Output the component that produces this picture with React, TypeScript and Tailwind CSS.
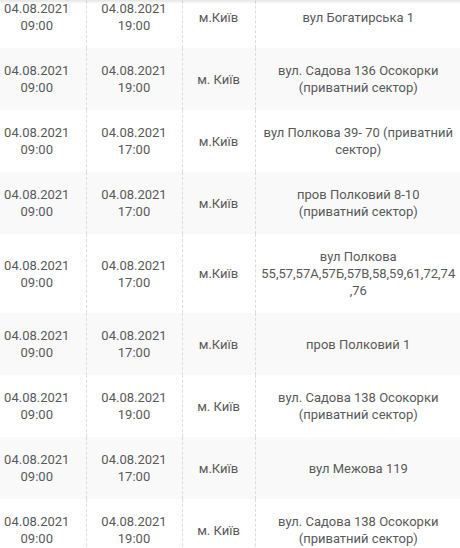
import React from "react";

type Row = { start: string; end: string; city: string; address: string[] };

const rows: Row[] = [
  { start: "09:00", end: "19:00", city: "м.Київ", address: ["вул Богатирська 1"] },
  { start: "09:00", end: "19:00", city: "м. Київ", address: ["вул. Садова 136 Осокорки", "(приватний сектор)"] },
  { start: "09:00", end: "17:00", city: "м.Київ", address: ["вул Полкова 39- 70 (приватний", "сектор)"] },
  { start: "09:00", end: "17:00", city: "м.Київ", address: ["пров Полковий 8-10", "(приватний сектор)"] },
  { start: "09:00", end: "17:00", city: "м.Київ", address: ["вул Полкова", "55,57,57А,57Б,57В,58,59,61,72,74", ",76"] },
  { start: "09:00", end: "17:00", city: "м.Київ", address: ["пров Полковий 1"] },
  { start: "09:00", end: "19:00", city: "м. Київ", address: ["вул. Садова 138 Осокорки", "(приватний сектор)"] },
  { start: "09:00", end: "17:00", city: "м.Київ", address: ["вул Межова 119"] },
  { start: "09:00", end: "19:00", city: "м. Київ", address: ["вул. Садова 138 Осокорки", "(приватний сектор)"] },
];

const date = "04.08.2021";

function Lines({ lines }: { lines: string[] }) {
  return (
    <>
      {lines.map((l, i) => (
        <div key={i} className="whitespace-nowrap">{l}</div>
      ))}
    </>
  );
}

export default function App() {
  return (
    <div className="relative h-[548px] w-[460px] overflow-hidden bg-white font-['Roboto',sans-serif] text-[13px] leading-[17px] text-[#595959]">
      {/* тень сверху */}
      <div className="pointer-events-none absolute inset-x-0 top-0 z-10 h-[4px] bg-gradient-to-b from-black/10 to-transparent" />

      <table className="-mt-[14px] ml-[-12px] w-[473px] table-fixed border-collapse">
        <colgroup>
          <col className="w-[98px]" />
          <col className="w-[96px]" />
          <col className="w-[73px]" />
          <col className="w-[206px]" />
        </colgroup>
        <tbody>
          {rows.map((r, i) => (
            <tr key={i} className={i % 2 === 1 ? "bg-[#f9f9f9]" : "bg-white"}>
              <td className="border-r border-dashed border-[#dcdcdc] px-1 py-[14px] text-center align-middle">
                <Lines lines={[date, r.start]} />
              </td>
              <td className="border-r border-dashed border-[#dcdcdc] px-1 py-[14px] text-center align-middle">
                <Lines lines={[date, r.end]} />
              </td>
              <td className="border-r border-dashed border-[#dcdcdc] px-1 py-[14px] text-center align-middle">
                {r.city}
              </td>
              <td className="px-1 py-[14px] text-center align-middle">
                <Lines lines={r.address} />
              </td>
            </tr>
          ))}
        </tbody>
      </table>
    </div>
  );
}
